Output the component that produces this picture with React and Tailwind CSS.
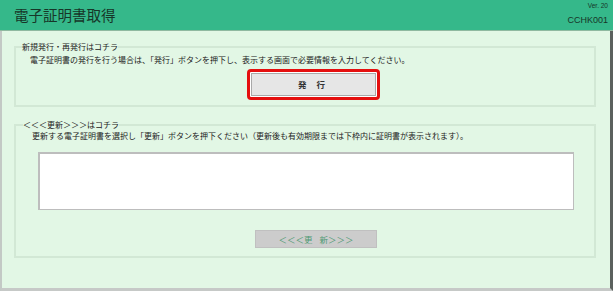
import React from 'react';

const jp = { fontFamily: '"Noto Sans CJK JP", "Noto Sans", sans-serif' };

const App = () => {
  return (
    <div className="w-[613px] h-[291px] flex flex-col bg-[#e2f7e5] overflow-hidden" style={jp}>
      {/* Header */}
      <div className="h-[31px] shrink-0 flex justify-between bg-[#35b88a] border-b border-[#8fb9a0]">
        <h1 className="pl-[14px] pt-[6px] text-[14.5px] leading-[18px] text-[#173528]">
          電子証明書取得
        </h1>
        <div
          className="flex flex-col items-end pr-[5px] text-[#173528]"
          style={{ fontFamily: '"Liberation Sans", Arial, sans-serif' }}
        >
          <span className="text-[6.5px] leading-[7px] mt-[2px]">Ver. 20</span>
          <span className="text-[9px] leading-[10px] mt-[6px]">CCHK001</span>
        </div>
      </div>

      {/* Body */}
      <div className="flex-1 flex flex-col border-l-2 border-l-[#c3c9c5] border-r-[3px] border-r-[#5b615e] border-b-[3px] border-b-[#c6c9c7] pl-[12px] pr-[14px] pt-[11px]">
        {/* 新規発行 */}
        <fieldset className="border-2 border-[#d2e8d5] h-[65px] px-[2px] m-0 min-w-0">
          <legend className="ml-[4px] px-0 text-[8px] leading-[10px] text-[#222]">新規発行・再発行はコチラ</legend>
          <p className="pl-[12px] mt-[3px] text-[8px] leading-[10px] text-[#222]">
            電子証明書の発行を行う場合は、「発行」ボタンを押下し、表示する画面で必要情報を入力してください。
          </p>
          <div className="mt-[4px] ml-[229px] w-[133px] h-[31px] border-[3px] border-[#e50f0f] rounded-[4px] p-[1px] bg-white">
            <button className="w-full h-full bg-[#e6e6e6] border border-[#a9a9a9] text-[8.5px] font-bold text-[#333] tracking-[4px] flex items-center justify-center">
              発 行
            </button>
          </div>
        </fieldset>

        {/* 更新 */}
        <fieldset className="mt-[13px] border-2 border-[#d2e8d5] h-[138px] px-[2px] m-0 min-w-0">
          <legend className="ml-[5px] px-0 text-[8px] leading-[10px] text-[#222]">＜＜＜更新＞＞＞はコチラ</legend>
          <p className="pl-[14px] mt-[1px] text-[8px] leading-[10px] text-[#222]">
            更新する電子証明書を選択し「更新」ボタンを押下ください（更新後も有効期限までは下枠内に証明書が表示されます）。
          </p>
          <div className="mt-[11px] ml-[20px] mr-[18px] h-[58px] bg-white border border-[#bdbdbd] border-t-2 border-l-2"></div>
          <button
            disabled
            className="mt-[20px] ml-[237px] w-[122px] h-[18px] bg-[#cccccc] border border-[#c0c0c0] text-[8.5px] text-[#4f9a73] flex items-center justify-center [word-spacing:5px]"
          >
            ＜＜＜更 新＞＞＞
          </button>
        </fieldset>
      </div>
    </div>
  );
};

export default App;
